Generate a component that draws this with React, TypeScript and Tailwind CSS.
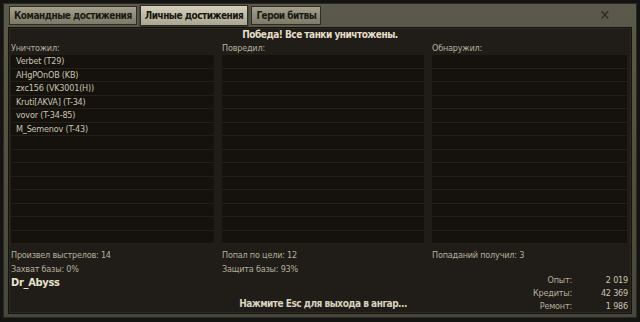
import React from 'react';

const killed = [
  'Verbet (T29)',
  'AHgPOnOB (KB)',
  'zxc156 (VK3001(H))',
  'Kruti[AKVA] (T-34)',
  'vovor (T-34-85)',
  'M_Semenov (T-43)',
];

const font = { fontFamily: '"DejaVu Sans Condensed", "DejaVu Sans", "Liberation Sans", sans-serif' };

function Column({ title, items }: { title: string; items: string[] }) {
  const rows = Array.from({ length: 14 }, (_, i) => items[i] ?? '');
  return (
    <div className="flex flex-col min-w-0">
      <div className="h-[13px] text-[9px] leading-[13px] tracking-[-0.2px] text-[#b4ae9c]">{title}</div>
      <div className="flex flex-col bg-[#15120e]">
        {rows.map((r, i) => (
          <div
            key={i}
            className="h-[13.5px] border-b border-[#242019] pl-[5px] text-[9px] leading-[13px] tracking-[-0.2px] text-[#c9c3b1] truncate"
          >
            {r}
          </div>
        ))}
      </div>
    </div>
  );
}

function Tab({ label, active }: { label: string; active?: boolean }) {
  return (
    <div
      className={
        active
          ? 'h-[21px] px-[4px] flex items-center border border-[#2e2d25] bg-gradient-to-b from-[#d4d0bc] to-[#a9a591] text-[#17160f] text-[10px] tracking-[-0.5px] font-bold shadow-[0_1px_2px_rgba(0,0,0,0.6)]'
          : 'h-[19px] mb-[1px] px-[4px] flex items-center border border-[#2e2d25] bg-gradient-to-b from-[#a3a08c] to-[#7c7a67] text-[#1b1a13] text-[10px] tracking-[-0.5px] font-bold'
      }
    >
      {label}
    </div>
  );
}

export default function App() {
  return (
    <div className="w-[640px] h-[322px] bg-[#141412] pt-[3px] px-[3px]" style={font}>
      <div className="h-[315px] flex flex-col bg-gradient-to-b from-[#5b5a4a] to-[#47463a] border border-[#2a2a22] px-[4px] pb-[3px]">
        {/* вкладки */}
        <div className="h-[22px] shrink-0 flex items-end gap-[3px] pl-[1px] relative">
          <Tab label="Командные достижения" />
          <Tab label="Личные достижения" active />
          <Tab label="Герои битвы" />
          <div className="absolute right-[22px] top-[4px] text-[#2b2a22] text-[14px] font-bold leading-none">✕</div>
        </div>
        {/* основная панель */}
        <div className="flex-1 min-h-0 overflow-hidden mt-[1px] flex flex-col bg-[#201d18] border border-[#14120e] shadow-[inset_0_0_0_1px_#2c2922] px-[2px]">
          <div className="h-[14px] text-center text-[10px] font-bold leading-[14px] tracking-[-0.5px] text-[#e4ddc8]">
            Победа! Все танки уничтожены.
          </div>
          <div className="grid grid-cols-[203px_202px_1fr] gap-x-[8px] pr-[2px]">
            <Column title="Уничтожил:" items={killed} />
            <Column title="Повредил:" items={[]} />
            <Column title="Обнаружил:" items={[]} />
          </div>
          <div className="mt-[4px] grid grid-cols-[203px_202px_1fr] gap-x-[8px] text-[9px] leading-[14px] tracking-[-0.2px] text-[#b4ae9c]">
            <div className="flex flex-col">
              <div>Произвел выстрелов: 14</div>
              <div>Захват базы: 0%</div>
              <div className="text-[11px] font-bold leading-[14px] tracking-[-0.3px] text-[#e8e2cf]">Dr_Abyss</div>
            </div>
            <div className="flex flex-col">
              <div>Попал по цели: 12</div>
              <div>Защита базы: 93%</div>
              <div className="mt-[21px] text-center text-[10px] font-bold leading-[14px] tracking-[-0.5px] text-[#d8d2bf]">
                Нажмите Esc для выхода в ангар...
              </div>
            </div>
            <div className="flex flex-col">
              <div>Попаданий получил: 3</div>
              <div className="mt-[12px] flex flex-col pr-[1px]">
                {[
                  ['Опыт:', '2 019'],
                  ['Кредиты:', '42 369'],
                  ['Ремонт:', '1 986'],
                ].map(([k, v]) => (
                  <div key={k} className="flex h-[13px] leading-[13px]">
                    <div className="flex-1 text-right pr-[3px]">{k}</div>
                    <div className="w-[53px] text-right text-[#c9c3b1]">{v}</div>
                  </div>
                ))}
              </div>
            </div>
          </div>
        </div>
      </div>
    </div>
  );
}
